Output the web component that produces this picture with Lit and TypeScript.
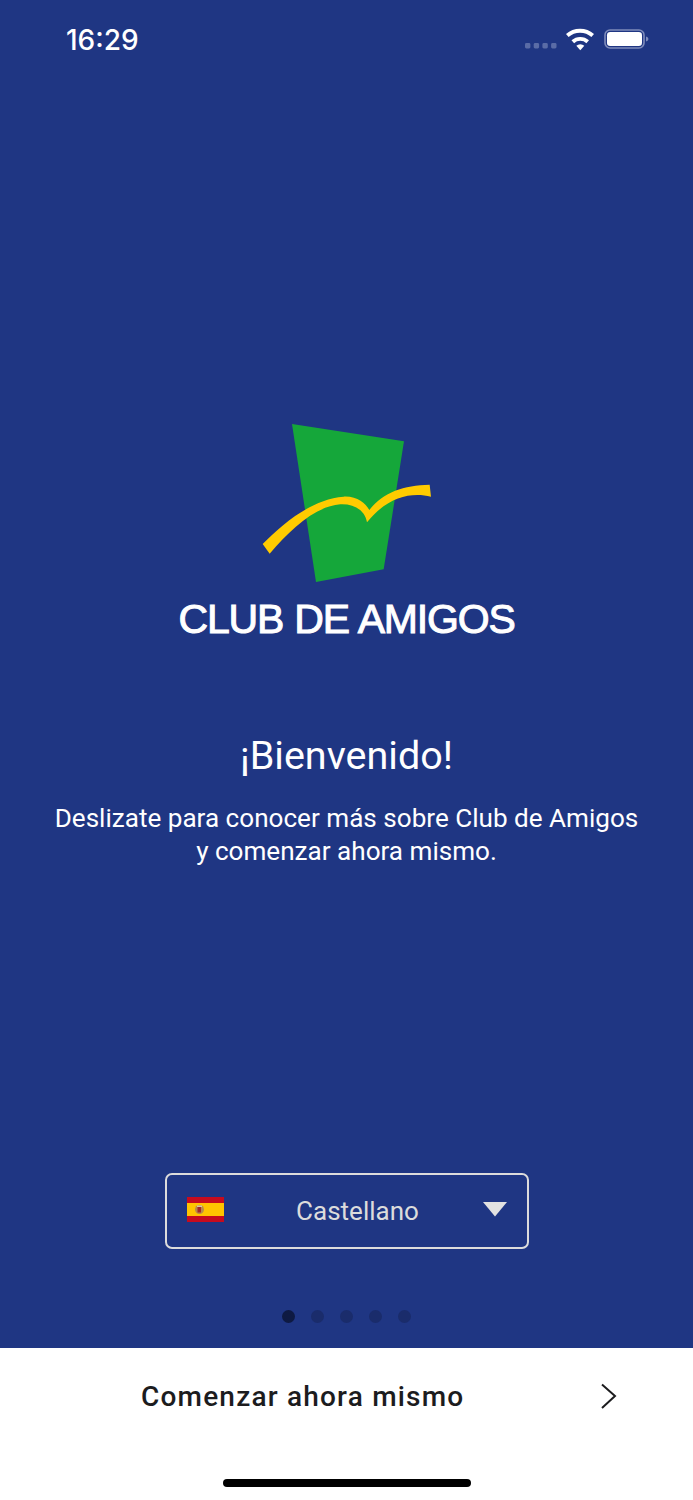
import { LitElement, html, css, svg } from "lit";
import { customElement } from "lit/decorators.js";

@customElement("app-root")
export class AppRoot extends LitElement {
  static styles = css`
    :host { display: block; width: 693px; height: 1500px; font-family: Roboto, "Noto Sans", sans-serif; }
    .screen { width: 693px; height: 1500px; display: flex; flex-direction: column; background: #1f3683; color: #fff; overflow: hidden; }
    .status { height: 80px; flex: none; display: flex; justify-content: space-between; align-items: flex-start; padding: 0 44px 0 66px; box-sizing: border-box; }
    .time { font-family: Inter, sans-serif; font-weight: 500; font-size: 28px; line-height: 80px; }
    .indicators { display: flex; align-items: center; padding-top: 26px; }
    .logo { flex: none; display: flex; flex-direction: column; align-items: center; margin-top: 330px; height: 240px; }
    .logo svg { display: block; flex: none; }
    .brand { font-family: "Liberation Sans", Arial, sans-serif; font-size: 41px; line-height: 46px; letter-spacing: -1.2px; word-spacing: 1px; white-space: nowrap; margin-top: 6px; -webkit-text-stroke: 1px #fff; }
    .welcome { flex: none; text-align: center; margin-top: 82px; }
    h1 { margin: 0; font-weight: 400; font-size: 39.5px; line-height: 48px; }
    p { margin: 22px 0 0; font-size: 26.1px; line-height: 33px; }
    .spacer { flex: 1; }
    .select { flex: none; align-self: center; width: 364px; height: 76px; box-sizing: border-box; border: 2px solid #dcdcdc; border-radius: 7px; display: flex; align-items: center; padding: 0 19px 0 20px; color: #dcdcdc; }
    .select svg { margin-bottom: 4px; }
    .select .name { flex: 1; text-align: center; font-size: 26px; padding-left: 10px; }
    .dots { flex: none; display: flex; justify-content: center; gap: 16px; margin-top: 61px; margin-bottom: 25px; }
    .dot { width: 13px; height: 13px; border-radius: 50%; background: #1a2c6b; }
    .dot.on { background: #0e1a42; }
    .footer { flex: none; height: 152px; background: #fff; display: flex; flex-direction: column; color: #1c1c1e; }
    .cta { display: flex; align-items: center; height: 96px; padding: 0 75px 0 141px; }
    .cta span { flex: 1; font-size: 28px; font-weight: 500; letter-spacing: 1.2px; }
    .home { width: 248px; height: 8px; border-radius: 4px; background: #000; margin: 35px auto 0; }
  `;

  render() {
    return html`
      <div class="screen">
        <div class="status">
          <div class="time">16:29</div>
          <div class="indicators">
            <svg width="125" height="28" viewBox="0 0 125 28">
              ${[0, 1, 2, 3].map((i) => svg`<rect x="${1 + i * 8.7}" y="17" width="5.4" height="5.4" rx="1.4" fill="#5a6ca6"/>`)}
              <path d="M42 8.100a21 21 0 0 1 28 0l-2.600 3a17 17 0 0 0-22.800 0z M47.500 14.300a13 13 0 0 1 17.500 0l-2.600 3a9 9 0 0 0-12.300 0z M52.300 19.700a6 6 0 0 1 8 0l-4 4.600z" fill="#fff"/>
              <rect x="81" y="4" width="39" height="18" rx="5" fill="none" stroke="#7f8cbb" stroke-width="1.600"/>
              <rect x="83" y="6" width="35" height="14" rx="3.200" fill="#fff"/>
              <path d="M122 10.500c1.600.4 2.400 1.300 2.400 2.500s-.8 2.100-2.400 2.500z" fill="#7f8cbb"/>
            </svg>
          </div>
        </div>
        <div class="logo">
          <svg width="350" height="180" viewBox="5 0 1050 540">
            <polygon points="365,42 701,94 640,478 437,516" fill="#15a73a"/>
            <path d="M277 402C335 345 420 268 520 260C560 258 585 280 597 300C640 245 700 226 778 224L782 260C720 245 650 262 590 337C584 300 550 281 510 283C430 290 360 360 298 431Z" fill="#ffcb00"/>
          </svg>
          <div class="brand">CLUB DE AMIGOS</div>
        </div>
        <div class="welcome">
          <h1>¡Bienvenido!</h1>
          <p>Deslizate para conocer más sobre Club de Amigos<br />y comenzar ahora mismo.</p>
        </div>
        <div class="spacer"></div>
        <div class="select">
          <svg width="37" height="25" viewBox="0 0 37 25">
            <rect width="37" height="25" fill="#c60b1e"/>
            <rect y="6" width="37" height="13" fill="#ffc400"/>
            <circle cx="12.500" cy="12.500" r="4.500" fill="#b98a4a"/>
            <rect x="10.500" y="10" width="3.500" height="5.500" fill="#a5262a"/>
            <rect x="10" y="8.500" width="5" height="1.500" fill="#d9c9a0"/>
          </svg>
          <span class="name">Castellano</span>
          <svg width="26" height="16" viewBox="0 0 26 16"><path d="M1 1H25L13 15.500Z" fill="#e2e2e2"/></svg>
        </div>
        <div class="dots">
          <div class="dot on"></div><div class="dot"></div><div class="dot"></div><div class="dot"></div><div class="dot"></div>
        </div>
        <div class="footer">
          <div class="cta">
            <span>Comenzar ahora mismo</span>
            <svg width="18" height="26" viewBox="0 0 18 26"><path d="M2 1.500L15 13L2 25" fill="none" stroke="#1c1c1e" stroke-width="2"/></svg>
          </div>
          <div class="home"></div>
        </div>
      </div>
    `;
  }
}
